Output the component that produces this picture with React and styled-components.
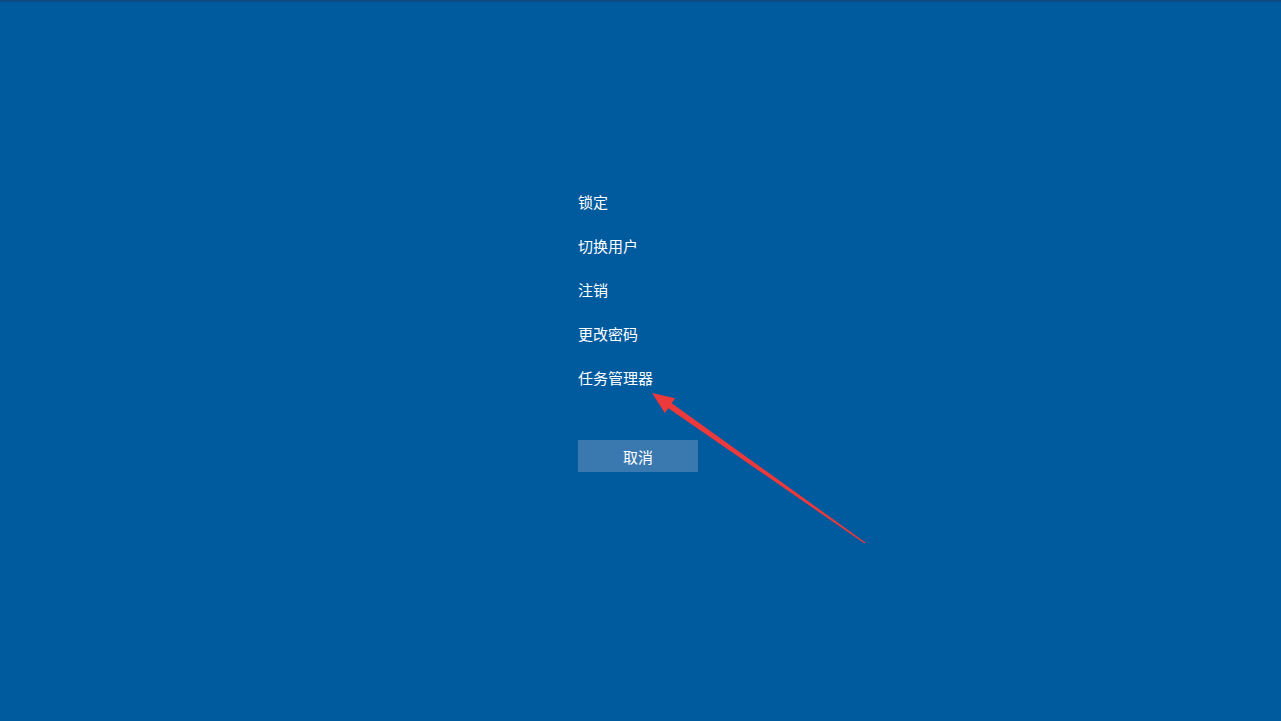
import styled, { createGlobalStyle } from "styled-components"

const GlobalStyle = createGlobalStyle`
    html, body {
        margin: 0;
        padding: 0;
        background: #005a9e;
    }
    * {
        box-sizing: border-box;
    }
`

const menuItems = ["锁定", "切换用户", "注销", "更改密码", "任务管理器"]

const App = () => {
    return (
        <Screen>
            <GlobalStyle />
            <Column>
                <Menu>
                    {menuItems.map(item => (
                        <MenuItem key={item}>{item}</MenuItem>
                    ))}
                </Menu>
                <CancelButton>取消</CancelButton>
            </Column>
            <Arrow viewBox="0 0 1281 721" aria-hidden="true">
                <polygon
                    points="652,393 675.2,398.3 671.7,403.2 865.4,542.4 864.6,543.6 668.3,408.2 664.8,413"
                    fill="#ec3a3c"
                />
            </Arrow>
        </Screen>
    )
}

export default App

const Screen = styled.div`
    position: relative;
    width: 100%;
    height: 721px;
    overflow: hidden;
    background: #005a9e;
    border-top: 2px solid #0d4b82;
    font-family: "Noto Sans CJK SC", "Noto Sans", sans-serif;
    color: #fff;
`

const Column = styled.div`
    width: 125px;
    margin: 0 auto;
    padding-top: 178px;
    display: flex;
    flex-direction: column;
    gap: 40px;
`

const Menu = styled.div`
    display: flex;
    flex-direction: column;
`

const MenuItem = styled.div`
    height: 44px;
    line-height: 44px;
    font-size: 15px;
    white-space: nowrap;
    cursor: pointer;
`

const CancelButton = styled.button`
    width: 120px;
    height: 32px;
    border: none;
    padding: 0;
    background: #3a78b0;
    color: #fff;
    font-family: inherit;
    font-size: 15px;
    cursor: pointer;
`

const Arrow = styled.svg`
    position: absolute;
    left: 0;
    top: -2px;
    width: 1281px;
    height: 721px;
    pointer-events: none;
`
